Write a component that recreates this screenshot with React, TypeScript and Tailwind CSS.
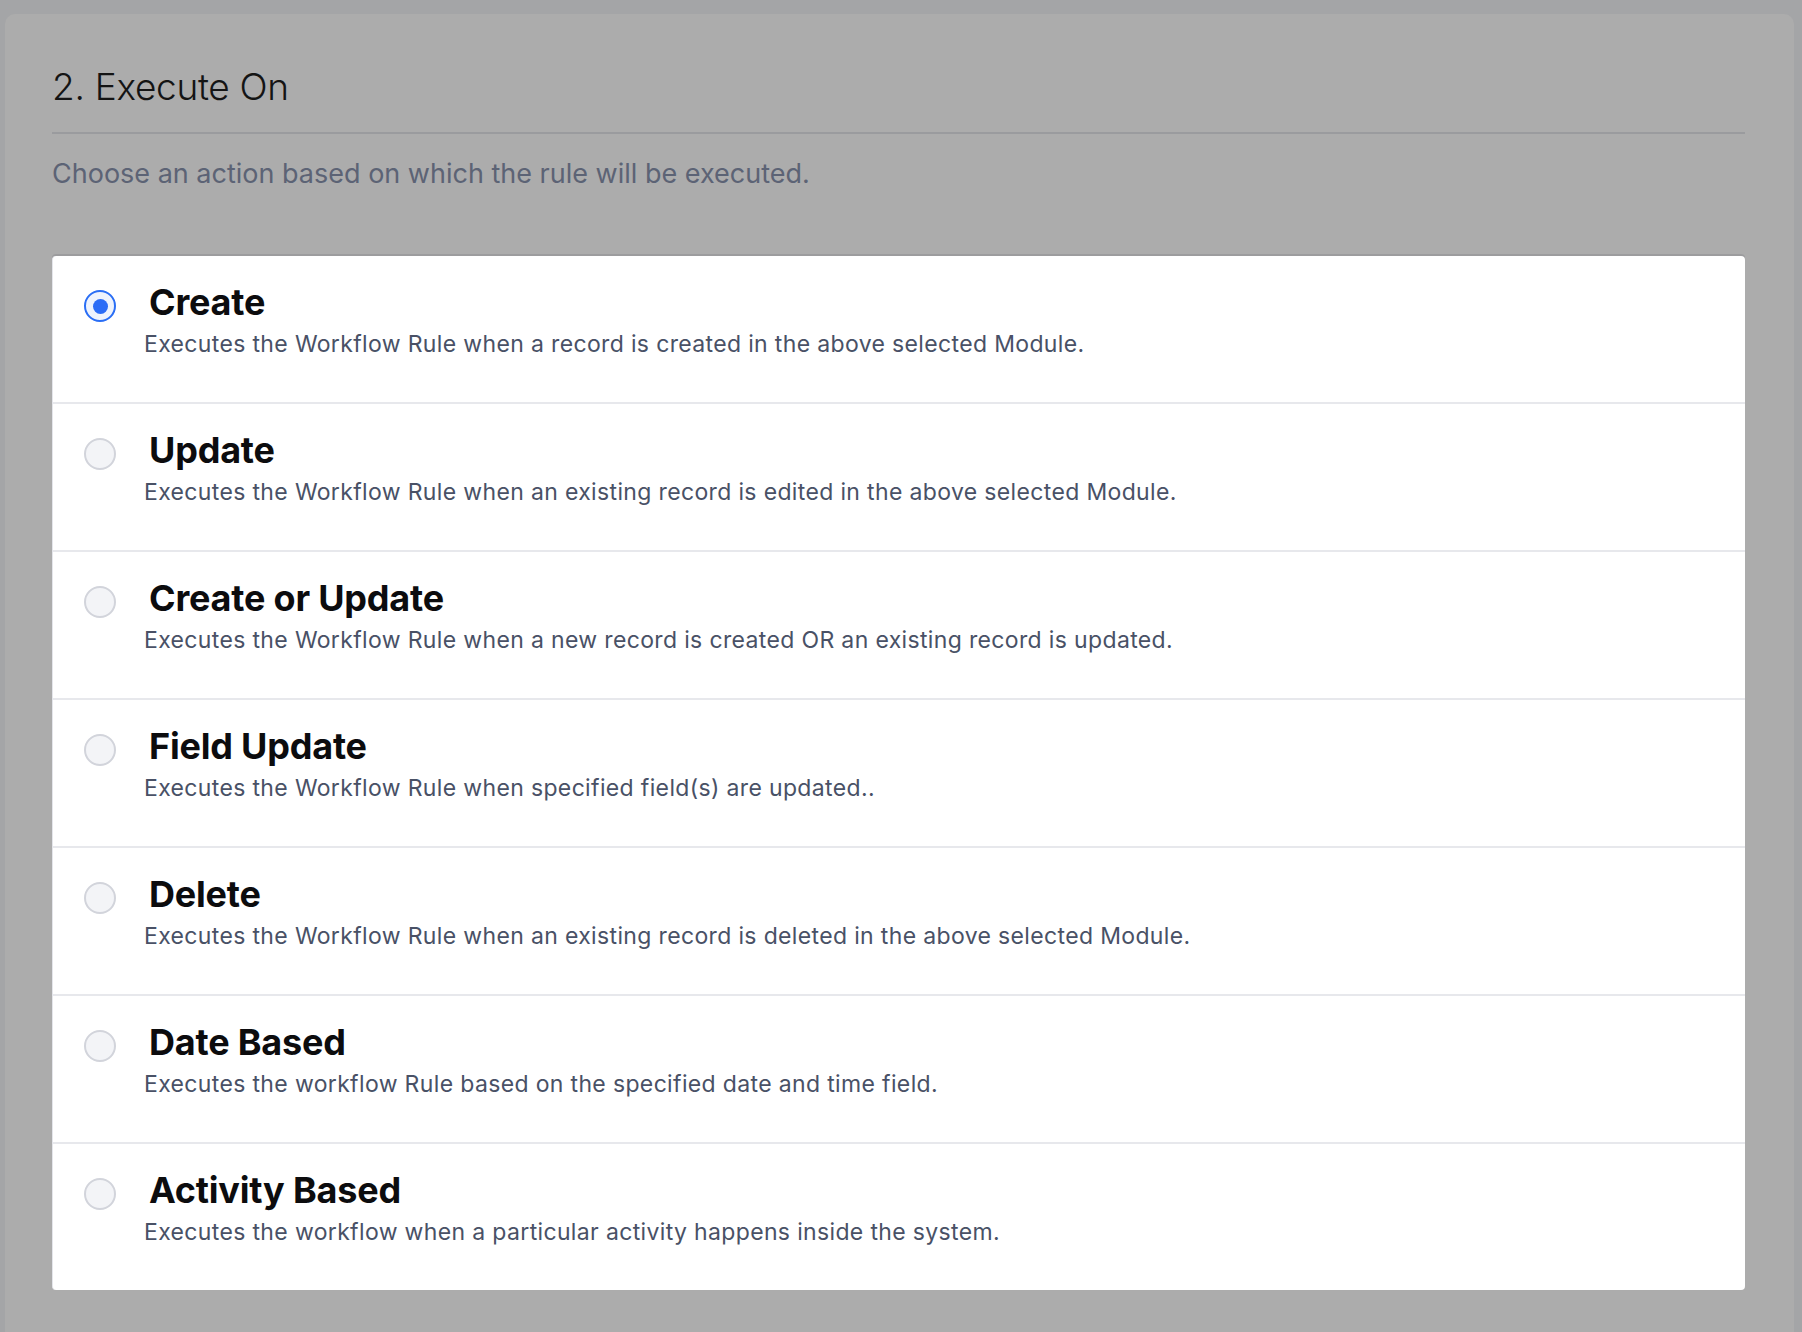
import { useState } from "react";

const options = [
  {
    title: "Create",
    desc: "Executes the Workflow Rule when a record is created in the above selected Module.",
  },
  {
    title: "Update",
    desc: "Executes the Workflow Rule when an existing record is edited in the above selected Module.",
  },
  {
    title: "Create or Update",
    desc: "Executes the Workflow Rule when a new record is created OR an existing record is updated.",
  },
  {
    title: "Field Update",
    desc: "Executes the Workflow Rule when specified field(s) are updated..",
  },
  {
    title: "Delete",
    desc: "Executes the Workflow Rule when an existing record is deleted in the above selected Module.",
  },
  {
    title: "Date Based",
    desc: "Executes the workflow Rule based on the specified date and time field.",
  },
  {
    title: "Activity Based",
    desc: "Executes the workflow when a particular activity happens inside the system.",
  },
];

const Radio = ({ checked }: { checked: boolean }) =>
  checked ? (
    <span className="flex h-[32px] w-[32px] shrink-0 items-center justify-center rounded-full border-[2px] border-[#2a6ef5] bg-[#eef3fd]">
      <span className="block h-[15px] w-[15px] rounded-full bg-[#2b6cf6]" />
    </span>
  ) : (
    <span className="block h-[32px] w-[32px] shrink-0 rounded-full border-[2px] border-[#d2d4db] bg-[#f3f4f7]" />
  );

export default function App() {
  const [selected, setSelected] = useState(0);

  return (
    <div
      className="flex min-h-screen flex-col bg-[#a4a5a7] pl-[5px] pr-[8px] pt-[14px]"
      style={{ fontFamily: "Inter, 'Noto Sans', sans-serif" }}
    >
      <div className="flex-1 rounded-t-[10px] bg-[#acacac] pl-[47px] pr-[49px] pt-[50px]">
        {/* heading */}
        <h2 className="text-[37px] font-light leading-[46px] tracking-[-0.3px] text-[#141414]">
          2. Execute On
        </h2>
        <div className="mt-[22px] h-[2px] bg-[#9a9b9e]" />
        <p className="mt-[24px] text-[27px] leading-[32px] text-[#5c6375]">
          Choose an action based on which the rule will be executed.
        </p>

        {/* options card */}
        <div className="mt-[66px] overflow-hidden rounded-[4px] border-l border-[#e4e5ea] bg-white shadow-[0_-2px_0_#9c9c9e]">
          {options.map((o, i) => (
            <label
              key={o.title}
              onClick={() => setSelected(i)}
              className="flex h-[148px] cursor-pointer items-start border-b-[2px] border-[#e7e8ec] pl-[31px] last:h-[146px] last:border-b-0"
            >
              <span className="mt-[34px] block">
                <Radio checked={selected === i} />
              </span>
              <span className="ml-[28px] flex flex-col pt-[24px]">
                <span className="pl-[5px] text-[36px] font-bold leading-[44px] tracking-[-0.2px] text-[#0c0c0e]">
                  {o.title}
                </span>
                <span className="mt-[6px] text-[23px] leading-[28px] tracking-[0.35px] text-[#495166]">
                  {o.desc}
                </span>
              </span>
            </label>
          ))}
        </div>
      </div>
    </div>
  );
}
